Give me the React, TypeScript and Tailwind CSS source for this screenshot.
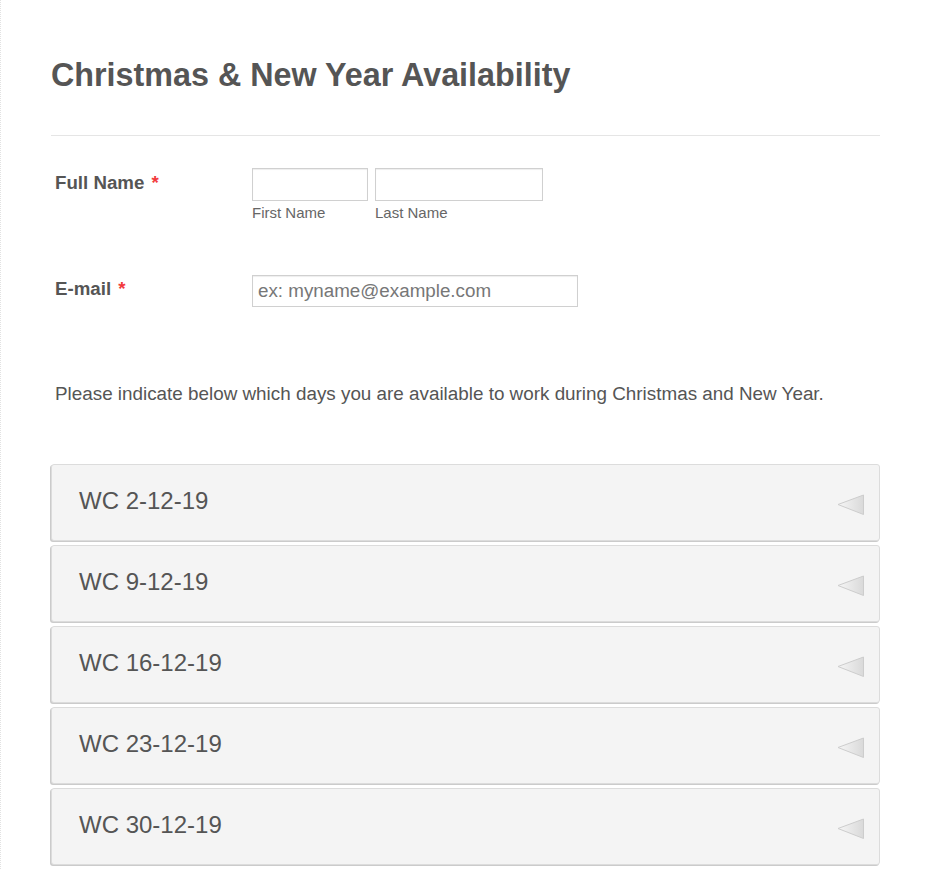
import React from 'react';

const weeks = ['WC 2-12-19', 'WC 9-12-19', 'WC 16-12-19', 'WC 23-12-19', 'WC 30-12-19'];

function Arrow() {
  return (
    <svg width="28" height="22" viewBox="0 0 28 22" className="shrink-0">
      <defs>
        <linearGradient id="tri" x1="0" y1="0" x2="1" y2="0">
          <stop offset="0" stopColor="#f6f6f6" />
          <stop offset="1" stopColor="#d9d9d9" />
        </linearGradient>
      </defs>
      <polygon points="1,10.5 26.5,1 26.5,20.5" fill="url(#tri)" stroke="#cdcdcd" strokeWidth="1" strokeLinejoin="round" />
    </svg>
  );
}

function WeekCard({ title }: { title: string }) {
  return (
    <div className="flex h-[77px] items-center justify-between rounded-[3px] border border-[#dcdcdc] bg-[#f4f4f4] pl-[27px] pr-[14px] shadow-[-1px_1px_0_#cbcbcb]">
      <span className="pb-[4px] text-[24px] leading-none text-[#555]">{title}</span>
      <div className="pt-[4px]">
        <Arrow />
      </div>
    </div>
  );
}

export default function App() {
  return (
    <div className="min-h-screen border-l border-dotted border-[#e2e2e2] bg-white font-['Liberation_Sans',Arial,sans-serif] text-[#555]">
      <div className="pl-[50px] pr-[50px] pb-6">
        <h1 className="pt-[59px] text-[32.3px] font-bold leading-none text-[#555]">
          Christmas &amp; New Year Availability
        </h1>
        <div className="mt-[44px] h-px bg-[#e5e5e5]" />

        {/* full name */}
        <div className="mt-[32px] flex">
          <label className="w-[201px] pl-[4px] pt-[6px] text-[18.7px] font-bold leading-none">
            Full Name <span className="ml-[2px] text-[#f23a3c]">*</span>
          </label>
          <div className="flex gap-[7px]">
            <div className="flex flex-col">
              <input className="h-[33px] w-[116px] border border-[#d0d0d0] bg-white shadow-[inset_0_1px_1px_#eee] outline-none" />
              <span className="pt-[4px] text-[15px] leading-none text-[#666]">First Name</span>
            </div>
            <div className="flex flex-col">
              <input className="h-[33px] w-[168px] border border-[#d0d0d0] bg-white shadow-[inset_0_1px_1px_#eee] outline-none" />
              <span className="pt-[4px] text-[15px] leading-none text-[#666]">Last Name</span>
            </div>
          </div>
        </div>

        {/* email */}
        <div className="mt-[55px] flex">
          <label className="w-[201px] pl-[4px] pt-[5px] text-[18.7px] font-bold leading-none">
            E-mail <span className="ml-[2px] text-[#f23a3c]">*</span>
          </label>
          <input
            placeholder="ex: myname@example.com"
            className="h-[32px] w-[326px] border border-[#d0d0d0] bg-white px-[5px] text-[18.8px] text-[#555] shadow-[inset_0_1px_1px_#eee] outline-none placeholder:text-[#777]"
          />
        </div>

        <p className="mt-[78px] pl-[4px] text-[18.85px] leading-none text-[#555]">
          Please indicate below which days you are available to work during Christmas and New Year.
        </p>

        <div className="mt-[60px] flex flex-col gap-[4px]">
          {weeks.map((w) => (
            <WeekCard key={w} title={w} />
          ))}
        </div>
      </div>
    </div>
  );
}
